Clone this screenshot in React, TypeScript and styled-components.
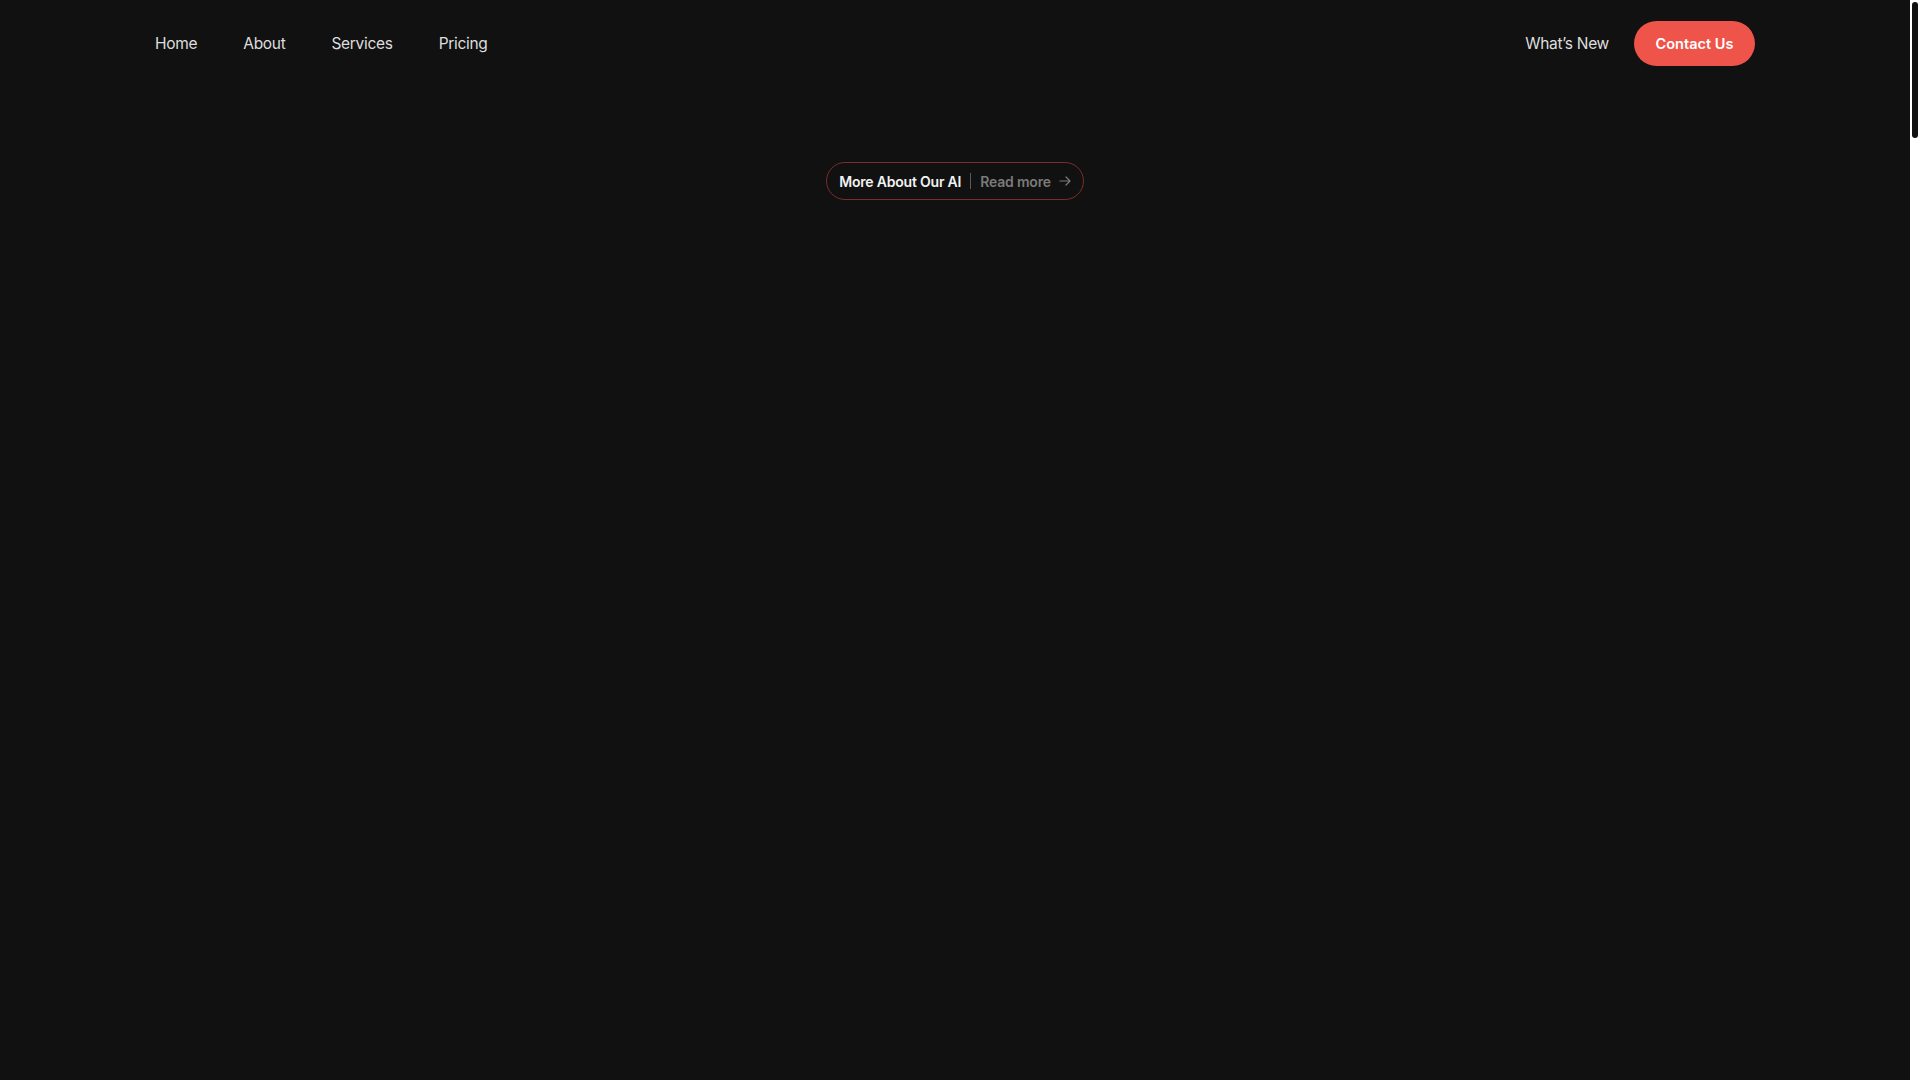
import React from 'react'
import styled, { createGlobalStyle } from 'styled-components'

const GlobalStyle = createGlobalStyle`
  html, body {
    margin: 0;
    padding: 0;
    background: #111111;
    font-family: Inter, "Noto Sans", "Liberation Sans", sans-serif;
    color: #e6e6e6;
  }
  * { box-sizing: border-box; }
`;

const Page = styled.div`
  min-height: 1080px;
  padding-right: 10px;
  background: #111111;
`;

// stand-in for the browser scrollbar seen on the right edge
const ScrollTrack = styled.div`
  position: fixed;
  top: 0;
  right: 0;
  width: 10px;
  height: 100vh;
  background: #ffffff;
`;

const ScrollThumb = styled.div`
  margin: 2px 2px 0 2px;
  height: 136px;
  border-radius: 4px;
  background: #111111;
`;

const HeaderContainer = styled.header`
  height: 87px;
  padding: 0 155px;
  display: flex;
  align-items: center;
  justify-content: space-between;
`;

const NavbarList = styled.ul`
  list-style-type: none;
  margin: 0;
  padding: 0;
  display: flex;
  align-items: center;
  gap: 46px;
`;

const NavItem = styled.li`
  font-size: 15.5px;
  font-weight: 400;
  letter-spacing: -0.3px;
  color: #dedede;
  cursor: pointer;
`;

const RightSide = styled.div`
  display: flex;
  align-items: center;
  gap: 25px;
`;

const ContactButton = styled.button`
  height: 45px;
  width: 121px;
  border: none;
  border-radius: 999px;
  background: #ef544a;
  color: #ffffff;
  font-family: inherit;
  font-size: 14.5px;
  font-weight: 600;
  cursor: pointer;
`;

const Hero = styled.section`
  display: flex;
  justify-content: center;
  padding-top: 75px;
`;

const Pill = styled.div`
  height: 38px;
  padding: 0 12px;
  display: flex;
  align-items: center;
  gap: 9px;
  border: 1px solid #7d2b2b;
  border-radius: 999px;
  font-size: 14px;
`;

const PillTitle = styled.span`
  color: #f2f2f2;
  font-weight: 600;
  letter-spacing: -0.2px;
`;

const Divider = styled.span`
  width: 1px;
  height: 16px;
  background: #5a5a5a;
`;

const ReadMore = styled.a`
  display: flex;
  align-items: center;
  gap: 8px;
  color: #7a7a7a;
  font-weight: 600;
  letter-spacing: -0.2px;
  cursor: pointer;
`;

const App = () => {
  return (
    <Page>
      <GlobalStyle />
      <HeaderContainer>
        <NavbarList>
          <NavItem>Home</NavItem>
          <NavItem>About</NavItem>
          <NavItem>Services</NavItem>
          <NavItem>Pricing</NavItem>
        </NavbarList>
        <RightSide>
          <NavItem as="span">What’s New</NavItem>
          <ContactButton>Contact Us</ContactButton>
        </RightSide>
      </HeaderContainer>

      <Hero>
        <Pill>
          <PillTitle>More About Our AI</PillTitle>
          <Divider />
          <ReadMore>
            Read more
            <svg width="12" height="12" viewBox="0 0 12 12" fill="none" stroke="#7a7a7a" strokeWidth="1.2" strokeLinecap="round" strokeLinejoin="round">
              <path d="M1 6h10M7 2l4 4-4 4" />
            </svg>
          </ReadMore>
        </Pill>
      </Hero>

      <ScrollTrack>
        <ScrollThumb />
      </ScrollTrack>
    </Page>
  )
}

export default App
